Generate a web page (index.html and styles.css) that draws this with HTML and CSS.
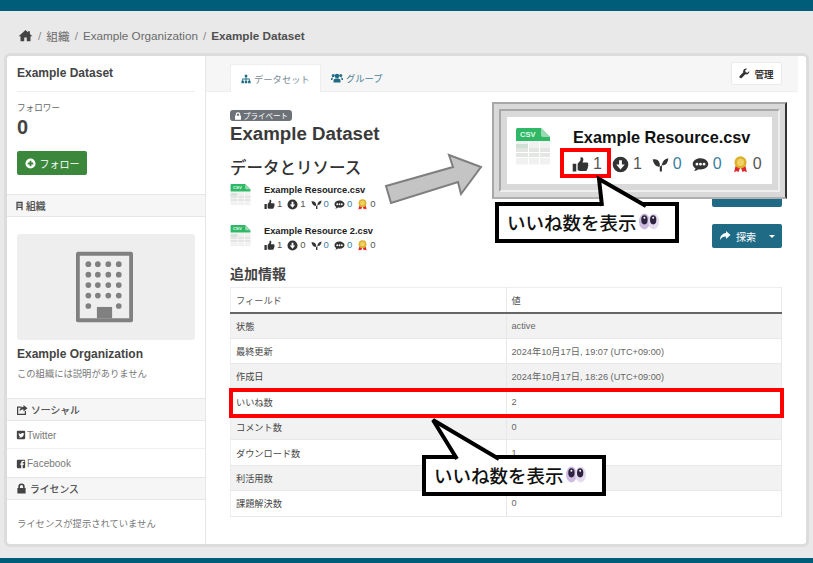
FILE: index.html
```html
<!DOCTYPE html>
<html lang="ja">
<head>
<meta charset="utf-8">
<title>Example Dataset</title>
<link rel="stylesheet" href="styles.css">
</head>
<body>
<svg class="defs" width="0" height="0" aria-hidden="true">
  <symbol id="i-home" viewBox="0 0 24 24"><path d="M12 3 1 13h3v8h6v-6h4v6h6v-8h3l-4-3.6V5h-3v1.7z"/></symbol>
  <symbol id="i-thumb" viewBox="0 0 24 24"><path d="M1 11h5v11H1zM8 11l4-5V2c2-1 4 0 4 3 0 2-1 3-1 4h6c2 0 2.500 2 1.500 3 1 1 .8 2.500-.3 3.200.6 1 .2 2.500-.8 3 .2 1.500-.8 2.800-2.400 2.800H11c-1.500 0-2-1-3-1z"/></symbol>
  <symbol id="i-down" viewBox="0 0 24 24"><path fill-rule="evenodd" d="M12 1a11 11 0 1 0 0 22 11 11 0 0 0 0-22zM10 6h4v6h4l-6 7-6-7h4z"/></symbol>
  <symbol id="i-sprout" viewBox="0 0 24 24"><path d="M1 5c5-1 9 1 10 6v11h3V12c1-5 4-8 9-9-.5 6-3 10-8 10h-1v-1c-1 3-3 3-5 3C4 14 2 10 1 5z"/></symbol>
  <symbol id="i-comment" viewBox="0 0 24 24"><path fill-rule="evenodd" d="M12 3C5.900 3 1 6.600 1 11.200c0 2.600 1.600 4.800 4 6.300-.3 1.400-1 2.500-2.200 3.500 2.500-.2 4.600-1.100 6.200-2.400 1 .2 2 .3 3 .3 6.100 0 11-3.500 11-7.700S18.100 3 12 3zM7 9.500a2 2 0 1 1 0 4 2 2 0 0 1 0-4zm5 0a2 2 0 1 1 0 4 2 2 0 0 1 0-4zm5 0a2 2 0 1 1 0 4 2 2 0 0 1 0-4z"/></symbol>
  <symbol id="i-medal" viewBox="0 0 24 24"><path fill="#e0262c" d="M5 14l-2 9 4-2 2 2 3-8zM19 14l2 9-4-2-2 2-3-8z"/><circle cx="12" cy="9" r="8.500" fill="#dcb02a"/><circle cx="12" cy="9" r="5" fill="#f0d265"/></symbol>
  <symbol id="i-lock" viewBox="0 0 24 24"><path fill-rule="evenodd" d="M12 1a7 7 0 0 0-7 7v3H3v12h18V11h-2V8a7 7 0 0 0-7-7zm0 3.500A3.500 3.500 0 0 1 15.500 8v3h-7V8A3.500 3.500 0 0 1 12 4.500z"/></symbol>
  <symbol id="i-sitemap" viewBox="0 0 24 24"><path d="M9 2h6v6h-2v3h8v5h2v6h-6v-6h2v-3h-6v3h2v6H9v-6h2v-3H5v3h2v6H1v-6h2v-5h8V8H9z"/></symbol>
  <symbol id="i-users" viewBox="0 0 24 24"><circle cx="12" cy="8" r="4.500"/><circle cx="4.500" cy="7" r="3"/><circle cx="19.500" cy="7" r="3"/><path d="M5 21v-4c0-3 3-4 7-4s7 1 7 4v4zM0 16v-2c0-2 2-3 5-3-2 1-2 3-2 5zM24 16v-2c0-2-2-3-5-3 2 1 2 3 2 5z"/></symbol>
  <symbol id="i-wrench" viewBox="0 0 24 24"><path d="M22.500 6.500l-4 4-4-1.200-1-3.800 4-4C13.500.500 9 3 9 7.500c0 .7.100 1.400.3 2L1.500 17.300c-1 1-1 3 .3 4.200 1.300 1.300 3.200 1.200 4.200.2l7.800-7.800c.7.200 1.400.3 2 .3 4.500 0 7.500-4.200 6.700-7.700z"/></symbol>
  <symbol id="i-plus" viewBox="0 0 24 24"><path fill-rule="evenodd" d="M12 1a11 11 0 1 0 0 22 11 11 0 0 0 0-22zm-2 5h4v4h4v4h-4v4h-4v-4H6v-4h4z"/></symbol>
  <symbol id="i-book" viewBox="0 0 18 24"><path d="M1 1h16v22h-3v-6H4v6H1zM4 5v3h10V5zM4 11v3h10v-3z" fill-rule="evenodd"/></symbol>
  <symbol id="i-share" viewBox="0 0 24 24"><path d="M14 2l9 8-9 8v-5c-6 0-9 2-12 7 0-8 4-13 12-14z"/></symbol>
  <symbol id="i-social" viewBox="0 0 24 24"><path d="M2 5h9v2.500H4.500v12h13V14H20v8H2zM15 2l8 6.500-8 6.500v-4c-4 0-6 1-8 4 0-5 3-9 8-9.500z"/></symbol>
  <symbol id="i-twitter" viewBox="0 0 24 24"><path fill-rule="evenodd" d="M4 2h16a2 2 0 0 1 2 2v16a2 2 0 0 1-2 2H4a2 2 0 0 1-2-2V4a2 2 0 0 1 2-2zm14.500 5.500c-.8.400-1.300.4-1.800.2-1.500-1.500-4.700-.5-4.200 2.300-2.500 0-4.500-1-5.800-2.700-.8 1.500-.3 3 .9 3.800-.5 0-1-.1-1.400-.4 0 1.500 1 2.600 2.400 3-.5.100-.9.100-1.300 0 .4 1.200 1.500 2 2.700 2-1.200.9-2.500 1.300-4 1.200 6 3.500 13-.3 12.700-7.700.5-.4.900-.9 1.300-1.400-.5.200-1 .4-1.500.4.500-.3.900-.8 1-1.300z"/></symbol>
  <symbol id="i-facebook" viewBox="0 0 24 24"><path d="M4 2h16a2 2 0 0 1 2 2v16a2 2 0 0 1-2 2h-4v-8h3l.5-3.500H16V8.500c0-1 .4-1.500 1.500-1.500H20V4h-3c-3 0-4.500 1.800-4.500 4.500v2H10V14h2.500v8H4a2 2 0 0 1-2-2V4a2 2 0 0 1 2-2z"/></symbol>
  <symbol id="i-csv" viewBox="0 0 36 38">
    <path fill="#f1f1f1" d="M1 14h34v22a1.500 1.500 0 0 1-1.500 1.500h-31A1.500 1.500 0 0 1 1 36z"/>
    <path fill="#cfe0d4" d="M1 17h13v4H1z"/>
    <path fill="#e4e6e4" d="M1 21h34v10H1z"/>
    <path fill="#fff" d="M1 25h34v1H1zM1 30h34v1H1zM13 14h1v24h-1zM24 14h1v24h-1z"/>
    <path fill="#2fb866" d="M2.500 1H26l9 9v4H1V2.500A1.500 1.500 0 0 1 2.500 1z"/>
    <path fill="#9cd9b2" d="M26 1l9 9h-7a2 2 0 0 1-2-2z"/>
  </symbol>
  <symbol id="i-eyes" viewBox="0 0 24 20">
    <ellipse cx="6.500" cy="10" rx="6.500" ry="9.500" fill="#cdbbdf"/><ellipse cx="17.500" cy="10" rx="6.500" ry="9.500" fill="#e6dcef"/>
    <ellipse cx="6.500" cy="8" rx="3.800" ry="5.500" fill="#2e2440"/><ellipse cx="17" cy="8" rx="3.800" ry="5.500" fill="#2e2440"/>
    <circle cx="6.500" cy="5.500" r="1.200" fill="#fff"/><circle cx="17" cy="5.500" r="1.200" fill="#fff"/>
  </symbol>
</svg>

<div class="topbar"></div>

<nav class="crumbs">
  <svg class="crumb-home"><use href="#i-home"/></svg>
  <span class="sep">/</span><span>組織</span>
  <span class="sep">/</span><span>Example Organization</span>
  <span class="sep">/</span><strong>Example Dataset</strong>
</nav>

<div class="card">
  <aside class="side">
    <section class="side-top">
      <h2 class="side-title">Example Dataset</h2>
      <div class="follow-label">フォロワー</div>
      <div class="follow-count">0</div>
      <a class="btn btn-green"><svg class="ico11"><use href="#i-plus"/></svg>フォロー</a>
    </section>
    <h3 class="side-head side-head-org"><svg class="ico-book"><use href="#i-book"/></svg>組織</h3>
    <section class="org">
      <div class="org-img">
        <svg class="org-building" viewBox="0 0 60 74">
          <path fill="#808080" d="M2 0h56a2 2 0 0 1 2 2v70a2 2 0 0 1-2 2H2a2 2 0 0 1-2-2V2a2 2 0 0 1 2-2z"/>
          <path fill="#eeeeee" d="M4 4h52v66H4z"/>
          <path fill="#808080" d="M22 58h16v12H22z"/>
          <g fill="#808080">
            <circle cx="13" cy="13" r="3"/><circle cx="23" cy="13" r="3"/><circle cx="34" cy="13" r="3"/><circle cx="45" cy="13" r="3"/>
            <circle cx="13" cy="24" r="3"/><circle cx="23" cy="24" r="3"/><circle cx="34" cy="24" r="3"/><circle cx="45" cy="24" r="3"/>
            <circle cx="13" cy="35" r="3"/><circle cx="23" cy="35" r="3"/><circle cx="34" cy="35" r="3"/><circle cx="45" cy="35" r="3"/>
            <circle cx="13" cy="46" r="3"/><circle cx="23" cy="46" r="3"/><circle cx="34" cy="46" r="3"/><circle cx="45" cy="46" r="3"/>
            <circle cx="13" cy="57" r="3"/><circle cx="45" cy="57" r="3"/>
          </g>
        </svg>
      </div>
      <div class="org-name">Example Organization</div>
      <div class="org-desc">この組織には説明がありません</div>
    </section>
    <h3 class="side-head"><svg class="ico12"><use href="#i-social"/></svg>ソーシャル</h3>
    <a class="social social-line"><svg class="ico10"><use href="#i-twitter"/></svg>Twitter</a>
    <a class="social"><svg class="ico10"><use href="#i-facebook"/></svg>Facebook</a>
    <h3 class="side-head"><svg class="ico11"><use href="#i-lock"/></svg>ライセンス</h3>
    <p class="license">ライセンスが提示されていません</p>
  </aside>

  <main class="main">
    <div class="tabbar">
      <ul class="tabs">
        <li class="tab tab-active"><svg class="ico10"><use href="#i-sitemap"/></svg>データセット</li>
        <li class="tab"><svg class="ico12"><use href="#i-users"/></svg>グループ</li>
      </ul>
      <a class="btn btn-white"><svg class="ico11"><use href="#i-wrench"/></svg>管理</a>
    </div>
    <div class="content">
      <div class="top-row">
        <div class="intro">
          <span class="badge"><svg class="ico8"><use href="#i-lock"/></svg>プライベート</span>
          <h1 class="title">Example Dataset</h1>
          <h2 class="res-title">データとリソース</h2>
          <div class="res">
            <svg class="csv" viewBox="0 0 36 38"><use href="#i-csv"/><text class="csv-label" x="5" y="9.500">CSV</text></svg>
            <div class="res-body">
              <div class="res-name">Example Resource.csv</div>
              <div class="stats">
                <span class="stat"><svg><use href="#i-thumb"/></svg>1</span>
                <span class="stat"><svg><use href="#i-down"/></svg>1</span>
                <span class="stat teal"><svg><use href="#i-sprout"/></svg>0</span>
                <span class="stat teal"><svg><use href="#i-comment"/></svg>0</span>
                <span class="stat"><svg><use href="#i-medal"/></svg>0</span>
              </div>
            </div>
          </div>
          <div class="res">
            <svg class="csv" viewBox="0 0 36 38"><use href="#i-csv"/><text class="csv-label" x="5" y="9.500">CSV</text></svg>
            <div class="res-body">
              <div class="res-name">Example Resource 2.csv</div>
              <div class="stats">
                <span class="stat"><svg><use href="#i-thumb"/></svg>1</span>
                <span class="stat"><svg><use href="#i-down"/></svg>0</span>
                <span class="stat teal"><svg><use href="#i-sprout"/></svg>0</span>
                <span class="stat teal"><svg><use href="#i-comment"/></svg>0</span>
                <span class="stat"><svg><use href="#i-medal"/></svg>0</span>
              </div>
            </div>
          </div>
        </div>
        <div class="actions">
          <a class="btn btn-teal"></a>
          <a class="btn btn-teal"><svg class="ico12"><use href="#i-share"/></svg>探索<i class="caret"></i></a>
        </div>
      </div>
      <h2 class="extra-title">追加情報</h2>
      <table class="meta">
        <thead><tr><th>フィールド</th><th>値</th></tr></thead>
        <tbody>
          <tr><td>状態</td><td>active</td></tr>
          <tr><td>最終更新</td><td>2024年10月17日, 19:07 (UTC+09:00)</td></tr>
          <tr><td>作成日</td><td>2024年10月17日, 18:26 (UTC+09:00)</td></tr>
          <tr><td>いいね数</td><td>2</td></tr>
          <tr><td>コメント数</td><td>0</td></tr>
          <tr><td>ダウンロード数</td><td>1</td></tr>
          <tr><td>利活用数</td><td></td></tr>
          <tr><td>課題解決数</td><td>0</td></tr>
        </tbody>
      </table>
    </div>
  </main>
</div>

<div class="bottombar"></div>

<!-- annotations drawn over the page -->
<svg class="arrow" viewBox="0 0 100 52"><polygon points="2,33 69,14 65,2 97,14 77,41 74,29 7,50" fill="#c4c4c4" stroke="#7f7f7f" stroke-width="2"/></svg>

<div class="frame">
  <div class="frame-inner">
    <div class="frame-white">
      <svg class="frame-csv" viewBox="0 0 36 38"><use href="#i-csv"/><text class="csv-label" x="5" y="9.500">CSV</text></svg>
      <div class="frame-body">
        <div class="frame-name">Example Resource.csv</div>
        <div class="stats stats-big">
          <span class="stat"><svg><use href="#i-thumb"/></svg>1</span>
          <span class="stat"><svg><use href="#i-down"/></svg>1</span>
          <span class="stat teal"><svg><use href="#i-sprout"/></svg>0</span>
          <span class="stat teal"><svg><use href="#i-comment"/></svg>0</span>
          <span class="stat"><svg><use href="#i-medal"/></svg>0</span>
        </div>
      </div>
    </div>
  </div>
</div>

<div class="hl hl-thumb"></div>
<div class="hl hl-row"></div>

<div class="callout callout-a">
  <span class="callout-box">いいね数を表示<svg class="eyes"><use href="#i-eyes"/></svg></span>
  <svg class="tail tail-a" viewBox="0 0 56 30"><polygon points="3,3 6,30 50,30" fill="#fff"/><polyline points="6,30 3,3 50,30" fill="none" stroke="#000" stroke-width="4"/></svg>
</div>
<div class="callout callout-b">
  <span class="callout-box">いいね数を表示<svg class="eyes"><use href="#i-eyes"/></svg></span>
  <svg class="tail tail-b" viewBox="0 0 72 42"><polygon points="3,3 27,42 69,42" fill="#fff"/><polyline points="27,42 3,3 69,42" fill="none" stroke="#000" stroke-width="4"/></svg>
</div>
</body>
</html>
```

FILE: styles.css
```css
* { box-sizing: border-box; }
html, body { margin: 0; padding: 0; }
body {
  width: 813px;
  height: 563px;
  overflow: hidden;
  position: relative;
  display: flex;
  flex-direction: column;
  background: #e9e9e9;
  color: #444;
  font-family: "Liberation Sans", "Noto Sans CJK JP", sans-serif;
  font-size: 10px;
}
.defs { position: absolute; }
svg { fill: currentColor; flex: none; }
h1, h2, h3, p, ul { margin: 0; padding: 0; }
.ico8 { width: 8px; height: 8px; }
.ico10 { width: 10px; height: 10px; }
.ico11 { width: 11px; height: 11px; }
.ico12 { width: 12px; height: 12px; }
.ico-book { width: 7px; height: 10px; }
.csv-label { font-size: 7.500px; font-weight: 700; fill: #e8f8ee; }

.topbar { height: 11px; background: #005d7a; flex: none; }
.bottombar { height: 5px; margin-top: 14px; background: #005d7a; flex: none; }

.crumbs {
  height: 45px;
  flex: none;
  padding: 3px 0 0 18px;
  display: flex;
  align-items: center;
  gap: 5px;
  font-size: 11.700px;
  color: #6b6b6b;
}
.crumbs strong { color: #505050; }
.crumb-home { width: 15px; height: 15px; color: #444; }
.sep { color: #8a8a8a; }

.card {
  flex: none;
  height: 488px;
  margin-left: 7px;
  width: 799px;
  display: flex;
  background: #fff;
  border-radius: 3px;
  box-shadow: 0 0 0 3px #dcdcdc;
  padding-right: 8px;
}

/* Sidebar */
.side { width: 199px; flex: none; border-right: 1px solid #e6e6e6; }
.side-top { height: 138px; padding: 0 10px; }
.side-title {
  font-size: 12px;
  color: #444;
  height: 36px;
  line-height: 34px;
  border-bottom: 1px solid #eee;
}
.follow-label { margin-top: 9px; font-size: 8.600px; line-height: 14px; color: #666; }
.follow-count { font-size: 20px; font-weight: 700; line-height: 24px; color: #444; }
.btn {
  display: inline-flex;
  align-items: center;
  justify-content: center;
  gap: 4px;
  border-radius: 2px;
  font-size: 10px;
}
.btn-green {
  margin-top: 12px;
  width: 70px;
  height: 24px;
  background: #3b873b;
  color: #fff;
}
.side-head {
  height: 23px;
  display: flex;
  align-items: center;
  gap: 3px;
  padding-left: 9px;
  background: #f6f6f6;
  border-top: 1px solid #e6e6e6;
  border-bottom: 1px solid #e6e6e6;
  font-size: 9.800px;
  font-weight: 400;
  color: #444;
  -webkit-text-stroke: 0.2px #444;
}
.org { height: 181px; padding: 17px 10px 0; }
.org-img {
  width: 178px;
  height: 106px;
  padding-right: 4px;
  background: #eeeeee;
  border-radius: 3px;
  display: flex;
  align-items: center;
  justify-content: center;
}
.org-building { width: 57px; height: 72px; }
.org-name { margin-top: 7px; font-size: 12px; font-weight: 700; line-height: 14px; color: #444; }
.org-desc { margin-top: 6px; font-size: 9.300px; line-height: 14px; color: #777; }
.social {
  height: 28px;
  display: flex;
  align-items: center;
  gap: 1px;
  padding: 1px 0 0 9px;
  font-size: 10px;
  color: #777;
}
.social svg { color: #444; }
.social-line { border-bottom: 1px solid #f1f1f1; }
.license { padding: 17px 10px 0; font-size: 9.300px; line-height: 14px; color: #777; }

/* Main */
.main { flex: 1; min-width: 0; }
.tabbar {
  height: 36px;
  padding: 6px 16px 0 24px;
  background: #f6f6f6;
  border-bottom: 1px solid #eee;
  display: flex;
  justify-content: space-between;
  align-items: flex-start;
}
.tabs { list-style: none; display: flex; margin-top: 2px; }
.tab {
  height: 28px;
  padding: 0 10px;
  display: flex;
  align-items: center;
  gap: 3px;
  font-size: 9.300px;
  color: #4a7f95;
  white-space: nowrap;
}
.tab-active {
  background: #fff;
  border: 1px solid #eee;
  border-bottom: 0;
  border-radius: 2px 2px 0 0;
  color: #7a8a92;
  width: 91px;
}
.tab svg { color: #1f6b85; }
.btn-white {
  width: 51px;
  height: 23px;
  background: #fff;
  border: 1px solid #eaeaea;
  color: #333;
  font-weight: 700;
  font-size: 9.500px;
}
.content { padding: 18px 16px 0 24px; }
.top-row { display: flex; justify-content: space-between; height: 155px; }
.intro { width: 400px; }
.badge {
  display: inline-flex;
  align-items: center;
  gap: 1px;
  height: 11px;
  padding: 0 4px;
  background: #6d7278;
  border-radius: 3px;
  color: #fff;
  font-size: 7.500px;
  vertical-align: top;
}
.title { font-size: 18.700px; line-height: 20px; margin-top: 3px; color: #3a3a3a; }
.res-title { font-size: 16.500px; line-height: 24px; margin-top: 12px; color: #333; font-weight: 500; }
.res { display: flex; margin-top: 3px; height: 37px; }
.res + .res { margin-top: 4px; }
.csv { width: 21px; height: 23px; }
.res-body { margin-left: 13px; padding-top: 1px; }
.res-name { font-size: 9.300px; font-weight: 700; color: #222; line-height: 12px; }
.stats { display: flex; gap: 5px; margin-top: 1px; font-size: 9.500px; line-height: 14px; color: #555; }
.stat { display: inline-flex; align-items: center; gap: 2px; }
.stat svg { width: 11px; height: 11px; color: #333; }
.teal { color: #39819f; }

.actions { width: 70px; display: flex; flex-direction: column; gap: 17px; margin-top: 73px; }
.btn-teal { height: 24px; background: #1f6b85; color: #fff; gap: 5px; }
.caret { width: 0; height: 0; border: 3px solid transparent; border-top-color: #fff; border-bottom: 0; margin-left: 8px; }

.extra-title { font-size: 14px; line-height: 18px; color: #444; font-weight: 700; }
.meta {
  width: 552px;
  margin-top: 4px;
  border-collapse: collapse;
  table-layout: fixed;
  font-size: 9.200px;
  color: #666;
  border: 1px solid #eee;
}
.meta th, .meta td {
  height: 25.400px;
  padding: 0 5px;
  font-weight: 400;
  text-align: left;
  border-right: 1px solid #e8e8e8;
}
.meta th { border-bottom: 2px solid #666; color: #555; }
.meta td { border-bottom: 1px solid #e8e8e8; }
.meta td:first-child { color: #444; }
.meta tbody tr:nth-child(odd) { background: #f2f2f2; }

/* Annotations */
.arrow { position: absolute; left: 384px; top: 153px; width: 100px; height: 52px; }
.frame {
  position: absolute;
  left: 492px;
  top: 102px;
  width: 295px;
  height: 97px;
  padding: 5px;
  background: #d9d9d9;
  border: 2px solid #a8a8a8;
  border-right-color: #333;
  border-bottom-color: #b0b0b0;
}
.frame-inner {
  height: 100%;
  padding: 6px;
  background: #d9d9d9;
  border: 2px solid #a8a8a8;
  border-bottom-color: #efefef;
  border-right-color: #efefef;
}
.frame-white {
  height: 100%;
  background: #fff;
  display: flex;
  padding: 10px 0 0 8px;
}
.frame-csv { width: 36px; height: 38px; }
.frame-body { margin-left: 22px; }
.frame-name { font-size: 16.300px; font-weight: 700; line-height: 20px; color: #111; white-space: nowrap; }
.stats-big { font-size: 16px; line-height: 20px; gap: 10px; margin-top: 7px; margin-left: -1px; }
.stats-big .stat { gap: 4px; }
.stats-big .stat svg { width: 17px; height: 17px; }
.hl { position: absolute; border: 4px solid #f00; }
.hl-thumb { left: 560px; top: 148px; width: 51px; height: 30px; }
.hl-row { left: 229px; top: 388px; width: 555px; height: 30px; }

.callout { position: absolute; }
.callout-a { left: 495px; top: 202px; }
.callout-b { left: 422px; top: 455px; }
.callout-box {
  display: flex;
  align-items: center;
  gap: 2px;
  width: 184px;
  height: 41px;
  padding: 0 0 2px 8px;
  background: #fff;
  border: 4px solid #000;
  font-size: 18.500px;
  font-weight: 500;
  color: #111;
  white-space: nowrap;
}
.tail { position: absolute; overflow: visible; }
.tail-a { left: 101px; top: -26px; width: 56px; height: 30px; }
.tail-b { left: 8px; top: -38px; width: 72px; height: 42px; }
.eyes { width: 20px; height: 17px; }
```
